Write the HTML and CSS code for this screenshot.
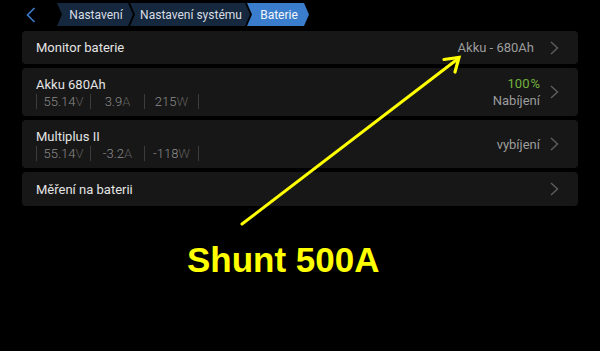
FILE: index.html
```html
<!DOCTYPE html>
<html lang="cs">
<head>
<meta charset="utf-8">
<link rel="stylesheet" href="styles.css">
</head>
<body>
<div class="screen">
  <div class="header">
    <svg class="back" width="10" height="16" viewBox="0 0 10 16"><polyline points="8.5,1 1.5,8 8.5,15" fill="none" stroke="#3a7dcc" stroke-width="1.6"/></svg>
    <div class="crumbs">
      <div class="crumb c1">Nastavení</div>
      <div class="crumb c2">Nastavení systému</div>
      <div class="crumb c3 active">Baterie</div>
    </div>
  </div>
  <div class="list">
    <div class="card short">
      <div class="left"><div class="title">Monitor baterie</div></div>
      <div class="right r1"><div class="value">Akku - 680Ah</div></div>
      <svg class="chev" width="9" height="14" viewBox="0 0 9 14"><polyline points="1,1 7.5,7 1,13" fill="none" stroke="#5e5e5e" stroke-width="1.4"/></svg>
    </div>
    <div class="card tall">
      <div class="left">
        <div class="title">Akku 680Ah</div>
        <div class="quants">
          <div class="q"><span class="num">55.14</span><span class="unit">V</span></div>
          <div class="q"><span class="num">3.9</span><span class="unit">A</span></div>
          <div class="q"><span class="num">215</span><span class="unit">W</span></div>
        </div>
      </div>
      <div class="right">
        <div class="green">100<span class="pct">%</span></div>
        <div class="value">Nabíjení</div>
      </div>
      <svg class="chev" width="9" height="14" viewBox="0 0 9 14"><polyline points="1,1 7.5,7 1,13" fill="none" stroke="#5e5e5e" stroke-width="1.4"/></svg>
    </div>
    <div class="card tall">
      <div class="left">
        <div class="title">Multiplus II</div>
        <div class="quants">
          <div class="q"><span class="num">55.14</span><span class="unit">V</span></div>
          <div class="q"><span class="num">-3.2</span><span class="unit">A</span></div>
          <div class="q"><span class="num">-118</span><span class="unit">W</span></div>
        </div>
      </div>
      <div class="right">
        <div class="value">vybíjení</div>
      </div>
      <svg class="chev" width="9" height="14" viewBox="0 0 9 14"><polyline points="1,1 7.5,7 1,13" fill="none" stroke="#5e5e5e" stroke-width="1.4"/></svg>
    </div>
    <div class="card short">
      <div class="left"><div class="title">Měření na baterii</div></div>
      <div class="right"></div>
      <svg class="chev" width="9" height="14" viewBox="0 0 9 14"><polyline points="1,1 7.5,7 1,13" fill="none" stroke="#5e5e5e" stroke-width="1.4"/></svg>
    </div>
  </div>
  <svg class="arrow" width="600" height="351" viewBox="0 0 600 351">
    <line x1="242" y1="224" x2="457" y2="59.5" stroke="#ffff00" stroke-width="3" stroke-linecap="round"/>
    <polyline points="444,59.5 459,57.5 455,72" fill="none" stroke="#ffff00" stroke-width="3.2" stroke-linejoin="miter" stroke-linecap="round"/>
  </svg>
  <div class="shunt">Shunt 500A</div>
</div>
</body>
</html>
```
FILE: styles.css
```css
html, body {
  margin: 0;
  padding: 0;
  background: #000;
}
.screen {
  position: relative;
  width: 600px;
  height: 351px;
  overflow: hidden;
  background: #000;
  font-family: Roboto, "Noto Sans", sans-serif;
}
.header {
  display: flex;
  align-items: center;
  height: 23px;
  padding-top: 3px;
  margin-bottom: 5px;
}
.back {
  margin-left: 26px;
  margin-right: 21px;
  margin-top: 1px;
}
.crumbs {
  display: flex;
  height: 23px;
}
.crumb {
  display: flex;
  align-items: center;
  height: 23px;
  font-size: 12px;
  color: #d8dde4;
  background: #16283d;
  clip-path: polygon(0 0, calc(100% - 5px) 0, 100% 50%, calc(100% - 5px) 100%, 0 100%, 5px 50%);
  box-sizing: border-box;
  justify-content: center;
  padding-left: 2px;
}
.crumb + .crumb {
  margin-left: -3px;
}
.c1 { width: 76px; }
.c2 { width: 120px; }
.c3 { width: 62px; }
.crumb.active {
  background: #3a7dcc;
  color: #f2f6fb;
}
.list {
  display: flex;
  flex-direction: column;
  gap: 4px;
  margin: 0 22px;
}
.card {
  display: flex;
  align-items: center;
  background: #171717;
  border-radius: 4px;
  padding: 0 19px 0 14px;
}
.card.short { height: 34px; }
.card.short:first-child { height: 33px; }
.card.tall { height: 48px; }
.left {
  flex: 1;
}
.title {
  font-size: 13px;
  color: #e4e4e4;
  line-height: 17px;
}
.quants {
  display: flex;
  border-right: 1px solid #3c3c3c;
  width: max-content;
  margin-top: 1px;
  height: 15px;
}
.q {
  width: 53px;
  border-left: 1px solid #3c3c3c;
  text-align: center;
  font-size: 13px;
  line-height: 15px;
  font-weight: 300;
}
.num { color: #8c8c8c; }
.unit { color: #5c5c5c; }
.right {
  text-align: right;
  margin-right: 10px;
  font-size: 13px;
  line-height: 17px;
}
.right.r1 { margin-right: 16px; }
.value { color: #9c9c9c; }
.green { color: #72b33e; }
.pct { margin-left: 1px; }
.chev {
  display: block;
}
.arrow {
  position: absolute;
  left: 0;
  top: 0;
  pointer-events: none;
}
.shunt {
  position: absolute;
  left: 187px;
  top: 236px;
  font-family: "Liberation Sans", Arial, sans-serif;
  font-weight: bold;
  font-size: 35px;
  color: #ffff00;
  line-height: 48px;
}
```
